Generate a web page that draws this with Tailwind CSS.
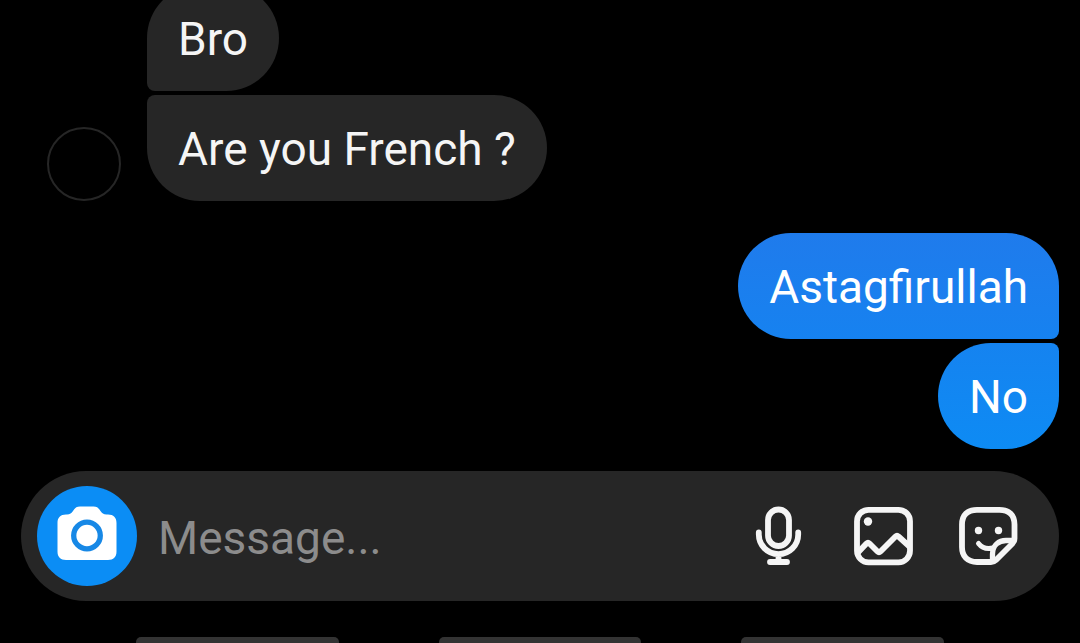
<!DOCTYPE html>
<html lang="en">
<head>
    <meta charset="UTF-8">
    <meta name="viewport" content="width=device-width, initial-scale=1.0">
    <title>Direct Message</title>
    <script src="https://cdn.jsdelivr.net/npm/@tailwindcss/browser@4"></script>
</head>
<body class="bg-black text-[#f5f5f5] font-[Roboto,sans-serif] text-[46px] leading-[54px] h-screen flex flex-col overflow-hidden">

    <!-- Conversation, newest message at the bottom -->
    <main class="flex-1 min-h-0 flex flex-col justify-end gap-8 pl-[47px] pr-[21px]">
        <div class="flex items-end gap-[26px]">
            <div class="size-[74px] shrink-0 rounded-full border-2 border-[#262626]"></div>
            <div class="flex flex-col items-start gap-1">
                <p class="bg-[#262626] px-[31px] pt-[27px] pb-[25px] rounded-[53px] rounded-bl-[8px]">Bro</p>
                <p class="bg-[#262626] px-[31px] pt-[27px] pb-[25px] rounded-[53px] rounded-tl-[8px]">Are you French ?</p>
            </div>
        </div>

        <div class="flex flex-col items-end gap-1 text-white">
            <p class="bg-linear-to-b from-[#1f7bec] to-[#1682f0] px-[31px] pt-[27px] pb-[25px] rounded-[53px] rounded-br-[8px]">Astagfirullah</p>
            <p class="bg-linear-to-b from-[#1583f0] to-[#0d8bf4] px-[31px] pt-[27px] pb-[25px] rounded-[53px] rounded-tr-[8px]">No</p>
        </div>
    </main>

    <!-- Message box -->
    <form class="shrink-0 mx-[21px] mt-[22px] mb-9 flex items-center bg-[#262626] rounded-full py-[15px] pl-4 pr-[41px]">
        <button type="button" aria-label="Camera" class="size-[100px] shrink-0 rounded-full bg-[#0b8df5] flex items-center justify-center">
            <svg class="size-[60px]" viewBox="0 0 60 60">
                <path fill="#fff" d="M9 8.500H10C13 8.500 14.500 7 16 5C18 2 19.500 .5 23 .5H36.500C40 .5 41.500 2 43.500 5C45 7 46.500 8.500 49.500 8.500H51C56.500 8.500 59.500 11.500 59.500 17V45.500C59.500 51 56.500 54 51 54H9C3.500 54 .5 51 .5 45.500V17C.5 11.500 3.500 8.500 9 8.500Z"/>
                <circle cx="30" cy="29.500" r="13.300" fill="none" stroke="#1788e6" stroke-width="5.300"/>
            </svg>
        </button>
        <input type="text" aria-label="Message" placeholder="Message..." class="flex-1 min-w-0 ml-[21px] pt-[3px] bg-transparent outline-none placeholder:text-[#8c8c8c]">
        <div class="flex gap-[45px]">
            <button type="button" aria-label="Voice message">
                <svg class="size-[60px]" viewBox="0 0 60 60" fill="none" stroke="currentColor" stroke-width="5.800" stroke-linecap="round">
                    <rect x="20" y="3.500" width="21" height="36.500" rx="10.500"/>
                    <path d="M10.800 26.500V28.500A19.700 19.700 0 0 0 50.200 28.500V26.500M30.500 48.500V56M22 56H39"/>
                </svg>
            </button>
            <button type="button" aria-label="Photo">
                <svg class="size-[60px]" viewBox="0 0 60 60" fill="none" stroke="currentColor" stroke-width="5.800" stroke-linejoin="round">
                    <rect x="4" y="3.800" width="53" height="52.500" rx="11.500"/>
                    <circle cx="15" cy="15.500" r="4.200" fill="currentColor" stroke="none"/>
                    <path d="M4.500 47L13.500 37.500Q15 36 16.500 37.500L24.500 45.500Q26 47 27.500 45.500L42.500 30.500Q44 29 45.500 30.500L57 41"/>
                </svg>
            </button>
            <button type="button" aria-label="Sticker">
                <svg class="size-[60px]" viewBox="0 0 60 60" fill="none" stroke="currentColor" stroke-width="5.800" stroke-linecap="round" stroke-linejoin="round">
                    <path d="M19 3.800H41.500C51 3.800 56.500 9 56.500 18.500V32.500Q56.500 35.500 54.500 37.500L38 54Q36 56 33 56H19C9.500 56 4 50.500 4 41V18.500C4 9 9.500 3.800 19 3.800Z"/>
                    <path stroke-width="5.300" d="M34.500 55V48C34.500 39 41 34.500 48 34.500H56"/>
                    <path stroke-width="5" d="M20.500 37.500C24 42 29 43.500 35 42"/>
                    <g fill="currentColor" stroke="none">
                        <circle cx="20.500" cy="24.500" r="3.700"/>
                        <circle cx="40.500" cy="24.500" r="3.700"/>
                    </g>
                </svg>
            </button>
        </div>
    </form>

    <!-- Top of the keyboard suggestions -->
    <div class="shrink-0 h-[6px] flex gap-[100px] px-[136px]">
        <div class="flex-1 bg-[#333333] rounded-t-[5px]"></div>
        <div class="flex-1 bg-[#333333] rounded-t-[5px]"></div>
        <div class="flex-1 bg-[#333333] rounded-t-[5px]"></div>
    </div>
</body>
</html>
